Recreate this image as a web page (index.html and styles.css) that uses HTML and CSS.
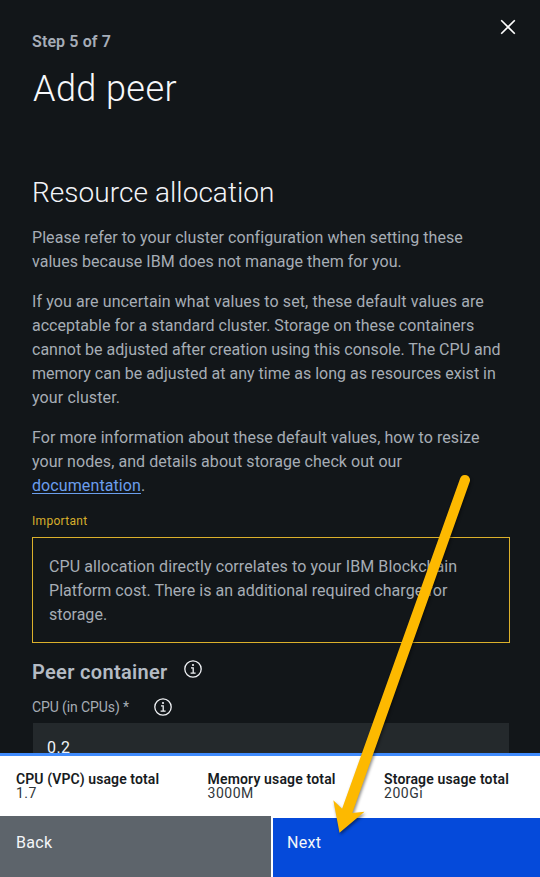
FILE: index.html
```html
<!DOCTYPE html>
<html lang="en">
<head>
<meta charset="utf-8">
<title>Add peer</title>
<link rel="stylesheet" href="styles.css">
</head>
<body>
<div class="panel">
  <button class="close" aria-label="Close"><svg width="16" height="16" viewBox="0 0 16 16"><path d="M1.2 1.2 14.8 14.8M14.8 1.2 1.2 14.8"/></svg></button>
  <main class="content">
    <div class="step">Step 5 of 7</div>
    <h1>Add peer</h1>
    <h2>Resource allocation</h2>
    <p><span class="line w3">Please refer to your cluster configuration when setting these</span>
    <span class="line w2">values because IBM does not manage them for you.</span></p>
    <p><span class="line w4">If you are uncertain what values to set, these default values are</span>
    <span class="line w1">acceptable for a standard cluster. Storage on these containers</span>
    <span class="line w0">cannot be adjusted after creation using this console. The CPU and</span>
    <span class="line w0">memory can be adjusted at any time as long as resources exist in</span>
    <span class="line w5">your cluster.</span></p>
    <p><span class="line w3">For more information about these default values, how to resize</span>
    <span class="line w3">your nodes, and details about storage check out our</span>
    <span class="line w4"><a href="#">documentation</a>.</span></p>
    <div class="important">Important</div>
    <div class="notice"><span class="line w4">CPU allocation directly correlates to your IBM Blockchain</span>
    <span class="line w2">Platform cost. There is an additional required charge for</span>
    <span class="line w1">storage.</span></div>
    <div class="section"><h3>Peer container</h3>
      <svg class="info" width="20" height="20" viewBox="0 0 20 20"><circle cx="10" cy="10" r="8.2"/><path d="M8 8.8h2.2v5.2M7.6 14.1h5"/><circle class="dot" cx="10" cy="6" r="1.1"/></svg></div>
    <div class="label"><span>CPU (in CPUs) *</span>
      <svg class="info" width="20" height="20" viewBox="0 0 20 20"><circle cx="10" cy="10" r="8.2"/><path d="M8 8.8h2.2v5.2M7.6 14.1h5"/><circle class="dot" cx="10" cy="6" r="1.1"/></svg></div>
    <div class="field">0.2</div>
  </main>
  <footer>
    <div class="totals">
      <div><b class="cpu">CPU (VPC) usage total</b><span class="value">1.7</span></div>
      <div><b>Memory usage total</b><span class="value">3000M</span></div>
      <div><b>Storage usage total</b><span class="value">200Gi</span></div>
    </div>
    <div class="actions"><button class="back">Back</button><button class="next">Next</button></div>
  </footer>
  <svg class="arrow" width="540" height="877" viewBox="0 0 540 877"><path d="M460.2 478.2A5 5 0 0 1 469.7 481.8L352.3 812.9 364.5 811.8 339.5 832.8 333.3 800.3 342.1 808.8Z"/></svg>
</div>
</body>
</html>
```
FILE: styles.css
```css
* { box-sizing: border-box; }
body { margin: 0; background: #121619; font-family: Roboto, sans-serif; }
.panel { position: relative; height: 877px; overflow: hidden; display: flex; flex-direction: column; }
.content { flex: 1; min-height: 0; overflow: hidden; padding: 30px 31px 0 32px; color: #a6adb5; font-size: 16px; line-height: 24px; }
.close { position: absolute; top: 19px; right: 24px; width: 16px; height: 16px; padding: 0; border: 0; background: none; display: flex; }
.close path { stroke: #fff; stroke-width: 1.6; fill: none; }
.step { font-weight: 600; letter-spacing: .12px; color: #a6adb8; }
h1 { margin: 13px 0 0 1px; font-size: 36px; line-height: 44px; font-weight: 300; letter-spacing: .42px; color: #f7f8fa; }
h2 { margin: 64px 0 15px; font-size: 28px; line-height: 36px; font-weight: 300; letter-spacing: .05px; color: #f2f4f8; }
p { margin: 0 0 16px; }
.line { display: block; white-space: nowrap; }
.w0 { letter-spacing: .005px; }
.w1 { letter-spacing: .02px; }
.w2 { letter-spacing: .035px; }
.w3 { letter-spacing: .062px; }
.w4 { letter-spacing: .098px; }
.w5 { letter-spacing: .122px; }
a { color: #6b9eed; text-underline-offset: 2px; text-decoration-thickness: 1px; }
.important { margin-top: -1px; font-size: 12px; line-height: 16px; letter-spacing: .3px; color: #d7ae2c; }
.notice { height: 106px; width: 478px; margin-top: 8px; padding: 17px 16px; border: 1px solid #dbb02b; }
.section { display: flex; align-items: flex-start; margin-top: 16px; height: 36px; gap: 15px; }
h3 { margin: 0; font-size: 20px; line-height: 26px; font-weight: 600; letter-spacing: .32px; color: #b4bbc4; }
.label { display: flex; align-items: center; gap: 24px; height: 28px; padding-bottom: 5px; font-size: 14px; line-height: 18px; letter-spacing: -.1px; }
.info { display: block; fill: none; stroke: #eff1f4; stroke-width: 1.3; }
.info .dot { fill: #eff1f4; stroke: none; }
.field { height: 40px; margin-left: 1px; padding: 13px 14px; background: #24292c; color: #f2f4f8; letter-spacing: .4px; }
footer { flex: none; height: 124px; border-top: 3px solid #408bfc; background: #fff; color: #171b1e; }
.totals { height: 60px; padding: 16px 31px 0 16px; display: flex; justify-content: space-between; font-size: 14px; line-height: 14px; }
.totals b, .value { display: block; white-space: nowrap; }
.totals b { font-weight: 600; letter-spacing: .15px; }
.totals .cpu { letter-spacing: .1px; }
.value { letter-spacing: .5px; color: #30363a; }
.actions { display: flex; gap: 2px; height: 61px; align-items: flex-end; }
button { font: inherit; }
.actions button { border: 0; text-align: left; line-height: 24px; color: #f4f6f9; font-size: 16px; letter-spacing: .3px; display: flex; align-items: flex-start; }
.actions .back { width: 271px; height: 61px; padding: 15px 16px 0; background: #5d646b; }
.actions .next { flex: 1; height: 59px; padding: 13px 14px 0; background: #054ada; }
.arrow { position: absolute; inset: 0; pointer-events: none; filter: drop-shadow(1px 2px 1.5px rgba(0,0,0,.45)); }
.arrow path { fill: #fdb900; }
```
